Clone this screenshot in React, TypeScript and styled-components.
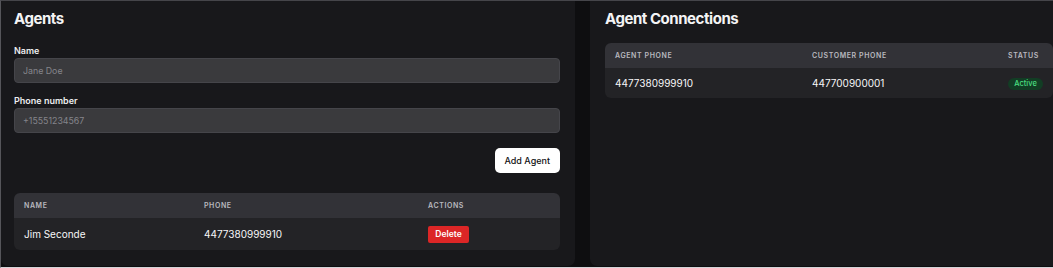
import React from "react";
import styled, { createGlobalStyle } from "styled-components";

const GlobalStyle = createGlobalStyle`
  html, body { margin: 0; padding: 0; background: #0e0e10; overflow: hidden; }
  body { font-family: Inter, "Noto Sans", sans-serif; -webkit-font-smoothing: antialiased; }
  * { box-sizing: border-box; }
`;

const Frame = styled.div`
  width: 1068px;
  height: 268px;
  background: #0e0e10;
  border-top: 1px solid #45454a;
  border-left: 1px solid #55555a;
  border-bottom: 1px solid #d4d4d8;
  display: grid;
  grid-template-columns: 574px 478px;
  column-gap: 15px;
  align-items: stretch;
  padding-bottom: 1px;
`;

const Card = styled.section<{ $pl: number }>`
  background: #18181b;
  border-radius: 0 0 7px 7px;
  padding: 8px 15px 15px ${(p) => p.$pl}px;
  display: flex;
  flex-direction: column;
`;

const Title = styled.h2<{ $mb: number }>`
  margin: 0 0 ${(p) => p.$mb}px;
  font-size: 15px;
  line-height: 20px;
  font-weight: 700;
  color: #f4f4f5;
  letter-spacing: -0.45px;
`;

const Field = styled.div`
  display: flex;
  flex-direction: column;
  margin-bottom: 12px;
`;

const Label = styled.label`
  font-size: 9px;
  line-height: 12px;
  font-weight: 600;
  color: #ececef;
  margin-bottom: 1px;
`;

const Input = styled.input`
  height: 25px;
  width: 100%;
  background: #3a3a3d;
  border: 1px solid #45454a;
  border-radius: 4px;
  padding: 0 8px;
  font-family: inherit;
  font-size: 8.8px;
  color: #f4f4f5;
  outline: none;
  &::placeholder { color: #85858b; }
`;

const Actions = styled.div`
  display: flex;
  justify-content: flex-end;
  margin-top: 3px;
  margin-bottom: 20px;
`;

const PrimaryButton = styled.button`
  height: 25px;
  padding: 0 10px;
  background: #ffffff;
  color: #111113;
  border: none;
  border-radius: 5px;
  font-family: inherit;
  font-size: 9px;
  font-weight: 500;
  cursor: pointer;
`;

const TableWrap = styled.div<{ $w: number }>`
  width: ${(p) => p.$w}px;
  border-radius: 6px;
  overflow: hidden;
`;

const Table = styled.table`
  width: 100%;
  border-collapse: collapse;
  table-layout: fixed;
`;

const HeadRow = styled.tr`
  background: #323237;
`;

const Th = styled.th`
  text-align: left;
  padding: 8px 10px;
  line-height: 9px;
  font-size: 7px;
  font-weight: 600;
  letter-spacing: 0.6px;
  color: #b9b9bf;
  text-transform: uppercase;
`;

const BodyRow = styled.tr`
  background: #232326;
`;

const Td = styled.td`
  padding: 7.5px 10px;
  line-height: 15px;
  font-size: 10px;
  color: #f7f7f8;
  vertical-align: middle;
`;

const DangerButton = styled.button`
  height: 17px;
  width: 41px;
  padding: 0;
  background: #dc2626;
  color: #ffffff;
  border: none;
  border-radius: 2px;
  font-family: inherit;
  font-size: 8.5px;
  font-weight: 600;
  display: block;
  cursor: pointer;
`;

const Badge = styled.span`
  display: inline-flex;
  align-items: center;
  justify-content: center;
  height: 12px;
  width: 35px;
  border-radius: 6px;
  background: #123d24;
  color: #4ade80;
  font-size: 7.5px;
  font-weight: 500;
  vertical-align: middle;
`;

const agents = [{ name: "Jim Seconde", phone: "4477380999910" }];
const connections = [
  { agent: "4477380999910", customer: "447700900001", status: "Active" },
];

export default function App() {
  return (
    <>
      <GlobalStyle />
      <Frame>
        <Card $pl={13}>
          <Title $mb={16}>Agents</Title>
          <Field>
            <Label>Name</Label>
            <Input placeholder="Jane Doe" />
          </Field>
          <Field>
            <Label>Phone number</Label>
            <Input placeholder="+15551234567" />
          </Field>
          <Actions>
            <PrimaryButton>Add Agent</PrimaryButton>
          </Actions>
          <TableWrap $w={546}>
            <Table>
              <colgroup>
                <col style={{ width: 180 }} />
                <col style={{ width: 224 }} />
                <col style={{ width: 142 }} />
              </colgroup>
              <thead>
                <HeadRow>
                  <Th>Name</Th>
                  <Th>Phone</Th>
                  <Th>Actions</Th>
                </HeadRow>
              </thead>
              <tbody>
                {agents.map((a) => (
                  <BodyRow key={a.phone}>
                    <Td>{a.name}</Td>
                    <Td>{a.phone}</Td>
                    <Td>
                      <DangerButton>Delete</DangerButton>
                    </Td>
                  </BodyRow>
                ))}
              </tbody>
            </Table>
          </TableWrap>
        </Card>
        <Card $pl={15}>
          <Title $mb={14}>Agent Connections</Title>
          <TableWrap $w={448}>
            <Table>
              <colgroup>
                <col style={{ width: 197 }} />
                <col style={{ width: 196 }} />
                <col style={{ width: 55 }} />
              </colgroup>
              <thead>
                <HeadRow>
                  <Th>Agent Phone</Th>
                  <Th>Customer Phone</Th>
                  <Th>Status</Th>
                </HeadRow>
              </thead>
              <tbody>
                {connections.map((c) => (
                  <BodyRow key={c.agent + c.customer}>
                    <Td>{c.agent}</Td>
                    <Td>{c.customer}</Td>
                    <Td>
                      <Badge>{c.status}</Badge>
                    </Td>
                  </BodyRow>
                ))}
              </tbody>
            </Table>
          </TableWrap>
        </Card>
      </Frame>
    </>
  );
}
